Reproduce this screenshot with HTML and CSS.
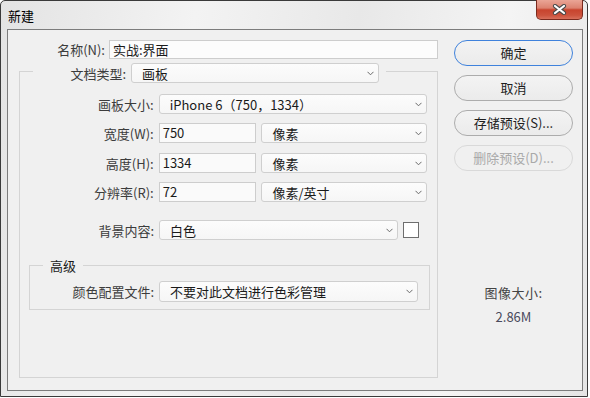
FILE: index.html
```html
<!DOCTYPE html>
<html lang="zh-CN">
<head>
  <meta charset="UTF-8">
  <title>新建</title>
  <link rel="stylesheet" href="styles.css">
</head>
<body>
  <div class="window">
    <div class="titlebar">
      <span class="title">新建</span>
      <div class="close">
        <svg width="15" height="11" viewBox="0 0 15 11">
          <path d="M3 2 L12 9 M12 2 L3 9" stroke="#4a4a4a" stroke-width="4.2" stroke-linecap="round" fill="none"/>
          <path d="M3 2 L12 9 M12 2 L3 9" stroke="#ffffff" stroke-width="2.2" stroke-linecap="round" fill="none"/>
        </svg>
      </div>
    </div>

    <div class="client">
      <div class="main">
        <div class="name-row">
          <span class="lbl name-lbl">名称(N):</span>
          <div class="field name-field">实战:界面</div>
        </div>

        <fieldset class="group">
          <legend class="doc-type">
            <span class="lbl doc-lbl">文档类型:</span>
            <div class="select doc-select">
              <span>画板</span>
              <svg class="chev" width="7" height="5" viewBox="0 0 7 5"><path d="M0.5 0.8 L3.5 3.8 L6.5 0.8" stroke="#6a6a6a" fill="none"/></svg>
            </div>
          </legend>

          <div class="row">
            <span class="lbl">画板大小:</span>
            <div class="select size-select">
              <span>iPhone 6（750，1334）</span>
              <svg class="chev" width="7" height="5" viewBox="0 0 7 5"><path d="M0.5 0.8 L3.5 3.8 L6.5 0.8" stroke="#6a6a6a" fill="none"/></svg>
            </div>
          </div>

          <div class="row gap9">
            <span class="lbl">宽度(W):</span>
            <div class="field num-field">750</div>
            <div class="select unit-select">
              <span>像素</span>
              <svg class="chev" width="7" height="5" viewBox="0 0 7 5"><path d="M0.5 0.8 L3.5 3.8 L6.5 0.8" stroke="#6a6a6a" fill="none"/></svg>
            </div>
          </div>

          <div class="row gap10">
            <span class="lbl">高度(H):</span>
            <div class="field num-field">1334</div>
            <div class="select unit-select">
              <span>像素</span>
              <svg class="chev" width="7" height="5" viewBox="0 0 7 5"><path d="M0.5 0.8 L3.5 3.8 L6.5 0.8" stroke="#6a6a6a" fill="none"/></svg>
            </div>
          </div>

          <div class="row gap9">
            <span class="lbl">分辨率(R):</span>
            <div class="field num-field">72</div>
            <div class="select unit-select">
              <span>像素/英寸</span>
              <svg class="chev" width="7" height="5" viewBox="0 0 7 5"><path d="M0.5 0.8 L3.5 3.8 L6.5 0.8" stroke="#6a6a6a" fill="none"/></svg>
            </div>
          </div>

          <div class="row gap18">
            <span class="lbl">背景内容:</span>
            <div class="select bg-select">
              <span>白色</span>
              <svg class="chev" width="7" height="5" viewBox="0 0 7 5"><path d="M0.5 0.8 L3.5 3.8 L6.5 0.8" stroke="#6a6a6a" fill="none"/></svg>
            </div>
            <div class="swatch"></div>
          </div>

          <fieldset class="group advanced">
            <legend class="adv-legend">高级</legend>
            <div class="row">
              <span class="lbl adv-lbl">颜色配置文件:</span>
              <div class="select profile-select">
                <span>不要对此文档进行色彩管理</span>
                <svg class="chev" width="7" height="5" viewBox="0 0 7 5"><path d="M0.5 0.8 L3.5 3.8 L6.5 0.8" stroke="#6a6a6a" fill="none"/></svg>
              </div>
            </div>
          </fieldset>
        </fieldset>
      </div>

      <div class="side">
        <div class="btn default">确定</div>
        <div class="btn">取消</div>
        <div class="btn">存储预设(S)...</div>
        <div class="btn disabled">删除预设(D)...</div>

        <div class="info">
          <div class="info-label">图像大小:</div>
          <div class="info-value">2.86M</div>
        </div>
      </div>
    </div>
  </div>
</body>
</html>
```

FILE: styles.css
```css
* {
  box-sizing: border-box;
}
body {
  margin: 0;
  background: #fff;
  font-family: "Noto Sans CJK SC", "Microsoft YaHei", sans-serif;
  font-size: 13px;
  color: #222;
}
.window {
  width: 588px;
  height: 397px;
  border: 1px solid #3a3a3a;
  border-radius: 5px 5px 0 0;
  background: linear-gradient(100deg, #e3e3e3 0%, #f3f3f3 30%, #e8e8e8 55%, #f4f4f4 78%, #e5e5e5 100%);
  padding: 0 4px 5px 6px;
  display: flex;
  flex-direction: column;
}
.titlebar {
  height: 28px;
  display: flex;
  justify-content: space-between;
  align-items: flex-start;
}
.title {
  padding: 6px 0 0 1px;
  line-height: 17px;
  color: #000;
}
.close {
  width: 47px;
  height: 20px;
  margin-top: -1px;
  border: 1px solid #7a2a1e;
  border-top: none;
  border-radius: 0 0 5px 5px;
  background: linear-gradient(#eaa596 0%, #dc8270 42%, #c8442e 52%, #cc523c 80%, #d8705c 100%);
  display: flex;
  align-items: center;
  justify-content: center;
}
.client {
  height: 362px;
  border: 1px solid #7c7c7c;
  background: #f0f0f0;
  display: flex;
  padding: 10px 9px 0 11px;
}
.main {
  width: 419px;
}
.lbl {
  color: #3c3c3c;
  text-align: right;
  white-space: nowrap;
}
.name-row {
  display: flex;
  align-items: center;
  gap: 4px;
  height: 19px;
}
.name-lbl {
  margin-left: -11px;
  width: 97px;
}
.field {
  height: 20px;
  line-height: 18px;
  padding-left: 3px;
  background: #fafafa;
  border: 1px solid #cdcdcd;
  color: #1a1a1a;
}
.name-field {
  width: 329px;
  height: 19px;
  line-height: 17px;
  background: #fcfcfc;
}
.select {
  height: 20px;
  border: 1px solid #cfcfcf;
  border-radius: 3px;
  background: linear-gradient(#fcfcfc, #f6f6f6);
  padding: 0 4px 0 10px;
  display: flex;
  align-items: center;
  justify-content: space-between;
  color: #1a1a1a;
  white-space: nowrap;
}
.chev {
  flex: none;
}
.group {
  margin: 0;
  padding: 11px 10px 67px 13px;
  border: 1px solid #d4d4d4;
  min-inline-size: 0;
}
.doc-type {
  padding: 4px 7px 0 0;
  display: flex;
  align-items: center;
  gap: 5px;
}
.doc-lbl {
  width: 93px;
}
.doc-select {
  width: 248px;
}
.row {
  display: flex;
  align-items: center;
  gap: 5px;
  height: 20px;
}
.row .lbl {
  width: 121px;
}
.gap9 {
  margin-top: 9px;
}
.gap10 {
  margin-top: 10px;
}
.gap18 {
  margin-top: 18px;
}
.size-select {
  width: 269px;
}
.num-field {
  width: 98px;
}
.unit-select {
  width: 166px;
}
.bg-select {
  width: 239px;
}
.swatch {
  width: 16px;
  height: 16px;
  background: #fff;
  border: 1px solid #6e6e6e;
}
.advanced {
  margin: 17px 0 0 -4px;
  width: 401px;
  padding: 7px 10px 7px 13px;
}
.adv-legend {
  padding: 0 7px;
  line-height: 17px;
  color: #1a1a1a;
}
.advanced .row {
  height: 21px;
}
.advanced .row .adv-lbl {
  width: 111px;
}
.profile-select {
  width: 259px;
  height: 21px;
}
.side {
  margin-left: 16px;
  width: 119px;
  display: flex;
  flex-direction: column;
}
.btn {
  height: 26px;
  margin-bottom: 9px;
  border: 1px solid #acacac;
  border-radius: 13px;
  background: linear-gradient(#f3f3f3, #ebebeb);
  text-align: center;
  line-height: 24px;
  color: #1e1e1e;
}
.btn.default {
  border-color: #3f82dc;
}
.btn.disabled {
  border-color: #d9d9d9;
  color: #a9a9a9;
  background: #f0f0f0;
}
.info {
  margin-top: 104px;
  text-align: center;
  line-height: 17px;
}
.info-label {
  color: #444;
  letter-spacing: 0.5px;
}
.info-value {
  margin-top: 7px;
  color: #4a4a5c;
}
```
